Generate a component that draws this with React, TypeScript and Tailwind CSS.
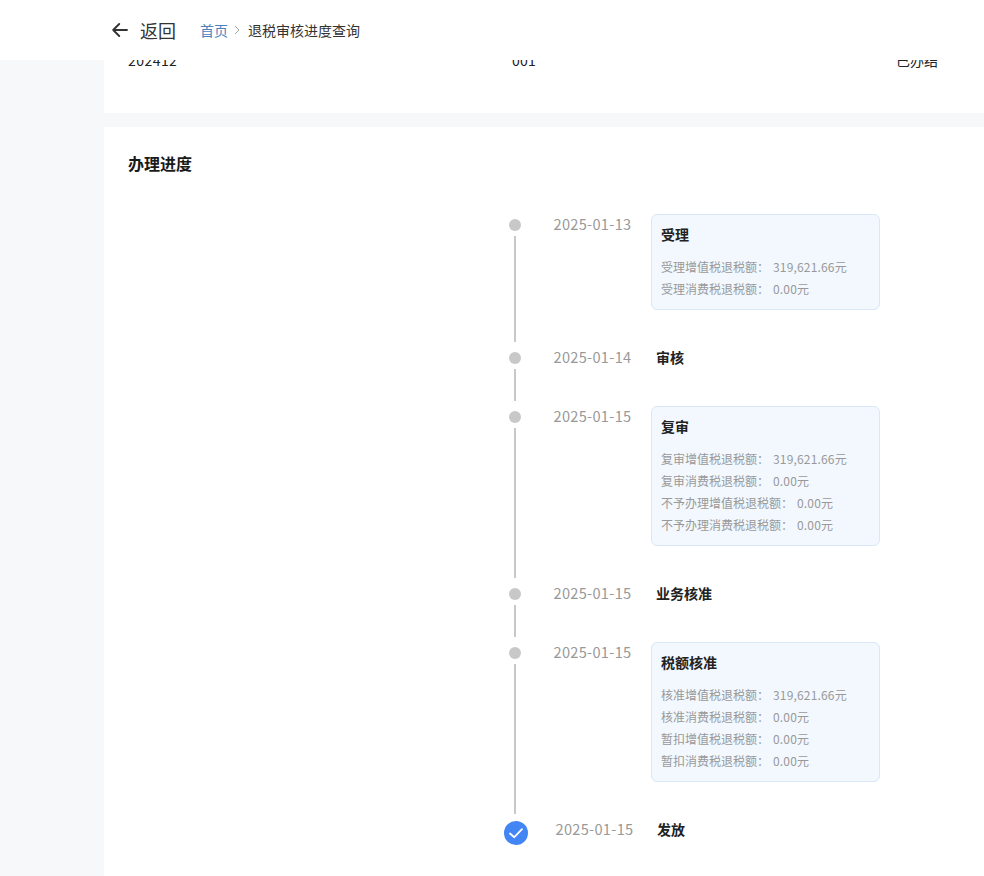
import React from "react";

type Step = { date: string; title: string; rows?: [string, string][]; last?: boolean };

const steps: Step[] = [
  { date: "2025-01-13", title: "受理", rows: [["受理增值税退税额：", "319,621.66元"], ["受理消费税退税额：", "0.00元"]] },
  { date: "2025-01-14", title: "审核" },
  { date: "2025-01-15", title: "复审", rows: [["复审增值税退税额：", "319,621.66元"], ["复审消费税退税额：", "0.00元"], ["不予办理增值税退税额：", "0.00元"], ["不予办理消费税退税额：", "0.00元"]] },
  { date: "2025-01-15", title: "业务核准" },
  { date: "2025-01-15", title: "税额核准", rows: [["核准增值税退税额：", "319,621.66元"], ["核准消费税退税额：", "0.00元"], ["暂扣增值税退税额：", "0.00元"], ["暂扣消费税退税额：", "0.00元"]] },
  { date: "2025-01-15", title: "发放", last: true },
];

function Item({ s }: { s: Step }) {
  if (s.last) {
    return (
      <div className="flex">
        <div className="w-6 ml-px mt-[2px] h-6 rounded-full bg-[#4285f4] flex items-center justify-center shrink-0">
          <svg width="16" height="16" viewBox="0 0 16 16" fill="none" stroke="#fff" strokeWidth="1.8" strokeLinecap="round" strokeLinejoin="round">
            <path d="M2 8.5 L6.3 12.2 L14 4.2" />
          </svg>
        </div>
        <div className="ml-[27.5px] w-[77.5px] text-[14.6px] leading-[20px] text-[#999] whitespace-nowrap tracking-[0.3px]">{s.date}</div>
        <div className="ml-6 text-[14px] leading-[20px] font-bold text-[#222]">{s.title}</div>
      </div>
    );
  }
  return (
    <div className="flex">
      <div className="w-6 shrink-0 flex flex-col items-center self-stretch">
        <div className="w-3 h-3 mt-[5px] rounded-full bg-[#c8c8c8] shrink-0" />
        <div className="w-[2px] flex-1 mt-[5px] mb-[5px] bg-[#c8c8c8]" />
      </div>
      <div className="ml-[26.5px] w-[78.5px] shrink-0 text-[14.6px] leading-[20px] text-[#999] whitespace-nowrap tracking-[0.3px]">{s.date}</div>
      <div>
        {s.rows ? (
          <div className="mb-[37px] ml-[19px] w-[229px] rounded-md border border-[#d8e8f8] bg-[#f2f8fe] pt-[9px] pb-[9px] px-[9px]">
            <div className="text-[14px] leading-[20px] font-bold text-[#222] mb-[12px]">{s.title}</div>
            {s.rows.map(([k, v]) => (
              <div key={k} className="flex text-[12px] leading-[22px] text-[#999] whitespace-nowrap">
                <span>{k}</span>
                <span className="ml-1 tracking-[0.17px]">{v}</span>
              </div>
            ))}
          </div>
        ) : (
          <div className="mb-[39px] ml-6 text-[14px] leading-[20px] font-bold text-[#222]">{s.title}</div>
        )}
      </div>
    </div>
  );
}

export default function App() {
  return (
    <div className="relative h-[876px] w-[984px] overflow-hidden bg-[#f6f8fa]" style={{ fontFamily: '"Noto Sans CJK SC", "Open Sans", sans-serif' }}>
      <header className="absolute top-0 left-0 right-0 h-[60px] bg-white z-10 flex items-center pl-[112px]">
        <svg width="16" height="16" viewBox="0 0 16 16" fill="none" stroke="#333" strokeWidth="1.9" strokeLinecap="round" strokeLinejoin="round">
          <path d="M1.2 8 H15 M7.2 2 L1.2 8 L7.2 14" />
        </svg>
        <span className="ml-3 text-[18px] text-[#333]">返回</span>
        <span className="ml-6 text-[14px] text-[#4a82c0]">首页</span>
        <svg className="ml-[5px]" width="8" height="10" viewBox="0 0 8 10" fill="none" stroke="#aaa" strokeWidth="1">
          <path d="M2 1 L6 5 L2 9" />
        </svg>
        <span className="ml-[7px] text-[14px] text-[#333]">退税审核进度查询</span>
      </header>
      <main className="ml-[104px]">
        <section className="h-[113px] bg-white pt-[49px] pl-6 flex text-[14px] leading-[22px] text-[#222]">
          <div className="w-[384px] tracking-[0.45px]">202412</div>
          <div className="w-[385px] tracking-[0.2px]">001</div>
          <div className="-ml-px">已办结</div>
        </section>
        <section className="mt-[14px] h-[749px] bg-white">
          <h2 className="pt-[25px] pl-6 text-[16px] leading-[22px] font-bold text-[#1a1a1a]">办理进度</h2>
          <div className="mt-[40px] ml-[399px] flex flex-col">
            {steps.map((s, i) => (
              <Item key={i} s={s} />
            ))}
          </div>
        </section>
      </main>
    </div>
  );
}
